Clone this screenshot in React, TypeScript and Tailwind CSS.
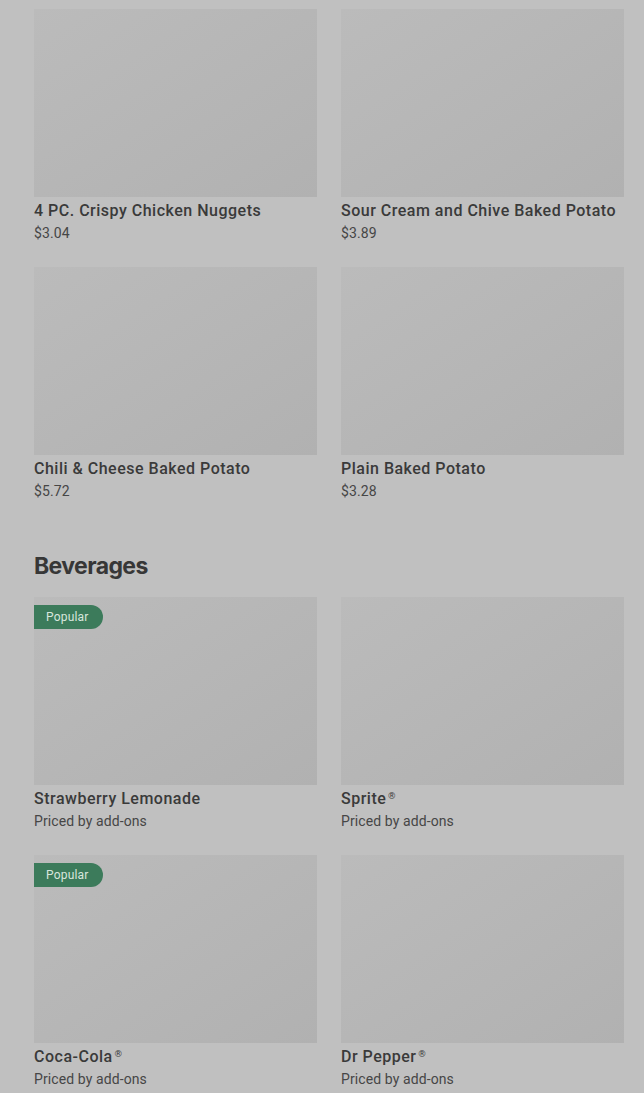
import React from "react";

type Item = { name: string; price: string; popular?: boolean; reg?: boolean };

const top: Item[] = [
  { name: "4 PC. Crispy Chicken Nuggets", price: "$3.04" },
  { name: "Sour Cream and Chive Baked Potato", price: "$3.89" },
  { name: "Chili & Cheese Baked Potato", price: "$5.72" },
  { name: "Plain Baked Potato", price: "$3.28" },
];

const bev: Item[] = [
  { name: "Strawberry Lemonade", price: "Priced by add-ons", popular: true },
  { name: "Sprite", price: "Priced by add-ons", reg: true },
  { name: "Coca-Cola", price: "Priced by add-ons", popular: true, reg: true },
  { name: "Dr Pepper", price: "Priced by add-ons", reg: true },
];

function Card({ item }: { item: Item }) {
  return (
    <div className="flex flex-col">
      <div className="relative h-[188px] w-full bg-gradient-to-br from-[#bbbbbb] to-[#b1b1b1]">
        {item.popular && (
          <div
            className="absolute left-0 top-[8px] flex h-[24px] items-center rounded-r-full bg-[#3c7b5b] pl-[12px] pr-[14px] text-[12px] tracking-[0.2px] text-[#d8e6dd]"
            style={{ fontFamily: "Roboto, sans-serif" }}
          >
            Popular
          </div>
        )}
      </div>
      <div
        className="mt-[2px] text-[16px] leading-[24px] font-medium tracking-[0.5px] text-[#3a3a3a]"
        style={{ fontFamily: "Roboto, sans-serif" }}
      >
        {item.name}
        {item.reg && (
          <span
            className="relative -top-[5px] ml-[1px] text-[9px] leading-none text-[#3a3a3a]"
            style={{ fontFamily: "'DejaVu Sans', sans-serif" }}
          >
            ®
          </span>
        )}
      </div>
      <div
        className="text-[14px] leading-[20px] tracking-[0.1px] text-[#464646]"
        style={{ fontFamily: "Roboto, sans-serif" }}
      >
        {item.price}
      </div>
    </div>
  );
}

export default function App() {
  return (
    <div className="min-h-[1093px] w-[644px] overflow-hidden bg-[#c0c0c0] pl-[34px] pr-[20px] pt-[9px]">
      <div className="grid grid-cols-2 gap-x-[24px] gap-y-[24px]">
        {top.map((it) => (
          <Card key={it.name} item={it} />
        ))}
      </div>
      <h2
        className="mt-[49px] mb-[15px] text-[23px] leading-[32px] font-bold tracking-[-0.6px] text-[#373737]"
        style={{ fontFamily: "Inter, sans-serif" }}
      >
        Beverages
      </h2>
      <div className="grid grid-cols-2 gap-x-[24px] gap-y-[24px]">
        {bev.map((it) => (
          <Card key={it.name} item={it} />
        ))}
      </div>
    </div>
  );
}
